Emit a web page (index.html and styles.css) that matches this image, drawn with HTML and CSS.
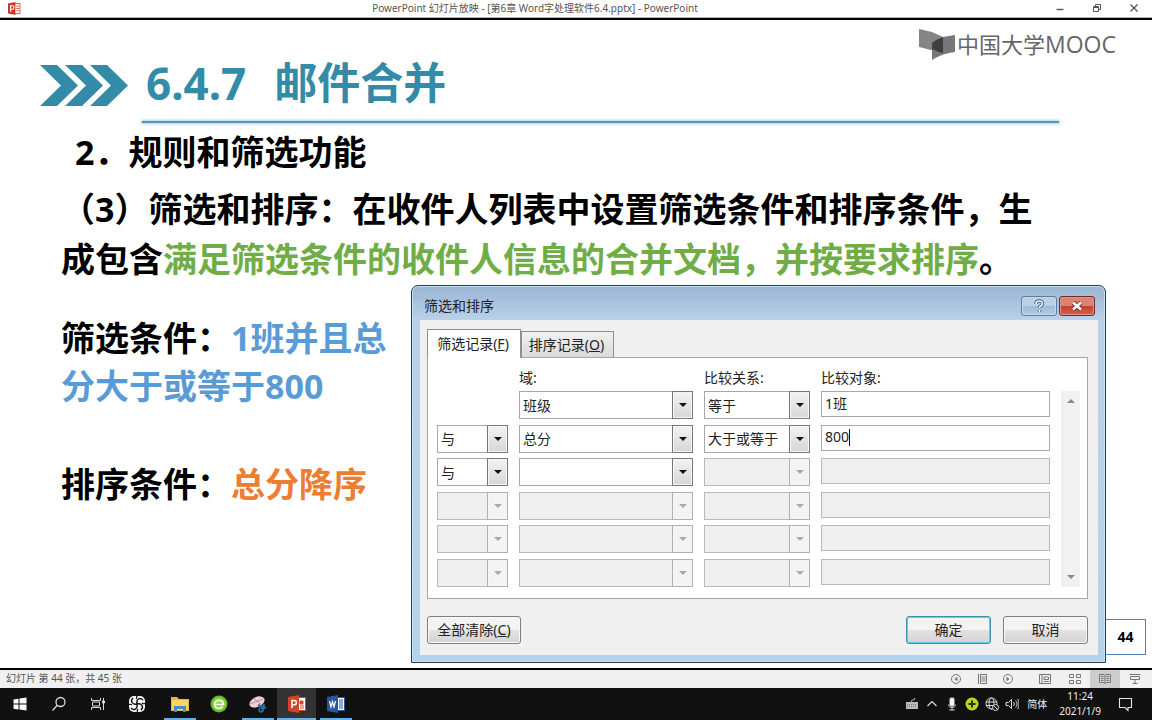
FILE: index.html
```html
<!DOCTYPE html>
<html lang="zh-CN">
<head>
<meta charset="utf-8">
<meta name="viewport" content="width=device-width, initial-scale=1">
<title>PowerPoint 幻灯片放映</title>
<link rel="stylesheet" href="styles.css">
</head>
<body>
<header class="titlebar">
  <svg class="app-icon" viewBox="0 0 14 14" aria-hidden="true"><path d="M7 1.500h6v11H7z" fill="#fff" stroke="#d8503c"/><path d="M9 4.500h3M9 7h3M9 9.500h3" stroke="#d8503c"/><path d="M0 1.500 8 0v14l-8-1.500z" fill="#c63a2b"/><path d="M2.800 10.500V4h1.800a1.800 1.800 0 0 1 0 3.800H2.800" fill="none" stroke="#fff" stroke-width="1.200"/></svg>
  <div class="window-title">PowerPoint 幻灯片放映 - [第6章 Word字处理软件6.4.pptx] - PowerPoint</div>
  <div class="window-buttons">
    <button aria-label="最小化"><svg viewBox="0 0 10 10"><path d="M1.500 6.500h7" stroke-width="1.400"/></svg></button>
    <button aria-label="还原"><svg viewBox="0 0 10 10"><path d="M1.500 3.500h5v5h-5zM3.500 3.500v-2h5v5h-2M1.500 4.500h5"/></svg></button>
    <button aria-label="关闭"><svg viewBox="0 0 10 10"><path d="M1.500 1.500l7 7M8.500 1.500l-7 7" stroke-width="1.300"/></svg></button>
  </div>
</header>

<main class="slide">
  <div class="slide-head">
    <svg class="chevrons" viewBox="0 0 88 41" aria-hidden="true"><path d="M0 0h17l21 20.500L17 41H0l21-20.500z"/><path d="M25 0h17l21 20.500L42 41H25l21-20.500z"/><path d="M50 0h17l21 20.500L67 41H50l21-20.500z"/></svg>
    <h1 class="slide-title"><span class="number">6.4.7</span><span>邮件合并</span></h1>
    <div class="logo">
      <svg class="logo-mark" viewBox="0 0 36 31" aria-hidden="true"><path d="M0 0l13 3 11 5v16L0 18z" fill="#858585"/><path d="M13 14q5-4 11-6l12-2v17q-12 1-23 8z" fill="#777"/><path d="M13 14q5-4 11-6v16q-5-1-11-4z" fill="#3f3f3f"/></svg>
      <span class="logo-text"><span class="logo-zh">中国大学</span>MOOC</span>
    </div>
  </div>
  <div class="rule"></div>
  <h2 class="subtitle">2．规则和筛选功能</h2>
  <p class="lead">（3）筛选和排序：在收件人列表中设置筛选条件和排序条件，生<br>成包含<span class="green">满足筛选条件的收件人信息的合并文档，并按要求排序</span>。</p>

  <div class="slide-body">
    <div class="notes">
      <p>筛选条件：<span class="blue">1班并且总<br>分大于或等于800</span></p>
      <p>排序条件：<span class="orange">总分降序</span></p>
    </div>

    <section class="dialog" aria-label="筛选和排序">
      <div class="dialog-title">
        <span>筛选和排序</span>
        <div class="dialog-controls">
          <button class="help" aria-label="帮助"><svg viewBox="0 0 14 14"><path d="M4 5c0-4 6.500-4 6.500-.5C10.500 7 7.500 6.500 7.500 9M7.500 11v2" stroke="#46617e" stroke-width="3.400"/><path d="M4 5c0-4 6.500-4 6.500-.5C10.500 7 7.500 6.500 7.500 9M7.500 11v2" stroke="#eef5fb" stroke-width="1.600"/></svg></button>
          <button class="close" aria-label="关闭"><svg viewBox="0 0 14 14"><path d="M3 3.500l8 7M11 3.500l-8 7" stroke="#75352f" stroke-width="4.400"/><path d="M3 3.500l8 7M11 3.500l-8 7" stroke="#fff" stroke-width="2.600"/></svg></button>
        </div>
      </div>
      <form class="client">
        <div class="tabs" role="tablist">
          <button type="button" class="tab active" role="tab" aria-selected="true">筛选记录(<u>F</u>)</button>
          <button type="button" class="tab" role="tab" aria-selected="false">排序记录(<u>O</u>)</button>
        </div>
        <div class="panel">
          <div class="filters heads"><span></span><span>域:</span><span>比较关系:</span><span>比较对象:</span></div>
          <div class="table-area">
            <div class="filters rows">
              <span></span>
              <span class="combo"><select aria-label="域 1"><option>班级</option></select></span>
              <span class="combo"><select aria-label="比较关系 1"><option>等于</option></select></span>
              <input aria-label="比较对象 1" value="1班">

              <span class="combo"><select aria-label="逻辑 2"><option>与</option></select></span>
              <span class="combo"><select aria-label="域 2"><option>总分</option></select></span>
              <span class="combo"><select aria-label="比较关系 2"><option>大于或等于</option></select></span>
              <span class="field"><input aria-label="比较对象 2" value="800"><i class="caret"></i></span>

              <span class="combo"><select aria-label="逻辑 3"><option>与</option></select></span>
              <span class="combo"><select aria-label="域 3"><option></option></select></span>
              <span class="combo off"><select aria-label="比较关系 3" disabled></select></span>
              <input aria-label="比较对象 3" disabled>

              <span class="combo off"><select aria-label="逻辑 4" disabled></select></span>
              <span class="combo off"><select aria-label="域 4" disabled></select></span>
              <span class="combo off"><select aria-label="比较关系 4" disabled></select></span>
              <input aria-label="比较对象 4" disabled>

              <span class="combo off"><select aria-label="逻辑 5" disabled></select></span>
              <span class="combo off"><select aria-label="域 5" disabled></select></span>
              <span class="combo off"><select aria-label="比较关系 5" disabled></select></span>
              <input aria-label="比较对象 5" disabled>

              <span class="combo off"><select aria-label="逻辑 6" disabled></select></span>
              <span class="combo off"><select aria-label="域 6" disabled></select></span>
              <span class="combo off"><select aria-label="比较关系 6" disabled></select></span>
              <input aria-label="比较对象 6" disabled>
            </div>
            <div class="scroll">
              <svg viewBox="0 0 8 4"><path d="M0 4l4-4 4 4z"/></svg>
              <svg viewBox="0 0 8 4"><path d="M0 0h8L4 4z"/></svg>
            </div>
          </div>
        </div>
        <div class="actions">
          <button type="button" class="btn clear">全部清除(<u>C</u>)</button>
          <button type="button" class="btn ok">确定</button>
          <button type="button" class="btn">取消</button>
        </div>
      </form>
    </section>

    <div class="page-no">44</div>
  </div>
</main>

<div class="statusbar">
  <span>幻灯片 第 44 张，共 45 张</span>
  <div class="views">
    <button aria-label="上一张"><svg viewBox="0 0 12 12"><circle cx="6" cy="6" r="4.500"/><path d="M7.500 3.800v4.400L4.300 6z" fill="#777" stroke="none"/></svg></button>
    <button aria-label="菜单"><svg viewBox="0 0 12 12"><path d="M2.500 1v10M4.500 1.500h6v9h-6zM5.500 4h4M5.500 6h4M5.500 8h4"/></svg></button>
    <button aria-label="下一张"><svg viewBox="0 0 12 12"><circle cx="6" cy="6" r="4.500"/><path d="M4.500 3.800v4.400L7.700 6z" fill="#777" stroke="none"/></svg></button>
    <button class="wide first" aria-label="普通视图"><svg viewBox="0 0 12 12"><path d="M.5 1.500h11v9H.5zM3 1.500v9M5 4h4.500v2.500H5zM5 8.500h5"/></svg></button>
    <button class="wide" aria-label="幻灯片浏览"><svg viewBox="0 0 12 12"><path d="M.5 1.500h4v3h-4zM7.500 1.500h4v3h-4zM.5 7.500h4v3h-4zM7.500 7.500h4v3h-4z"/></svg></button>
    <button class="wide current" aria-label="阅读视图"><svg viewBox="0 0 12 12"><path d="M.5 1.500H5l1 1 1-1h4.500v8H7l-1 1-1-1H.5zM6 2.500v8M2 3.500h2.500M2 5.500h2.500M2 7.500h2.500M7.500 3.500H10M7.500 5.500H10M7.500 7.500H10"/></svg></button>
    <button class="wide" aria-label="幻灯片放映"><svg viewBox="0 0 12 12"><path d="M.5 1.500h11M1.500 3.500h9v3h-9zM6 6.500v4M3.500 10.500h5"/></svg></button>
  </div>
</div>

<footer class="taskbar">
  <nav class="apps">
    <button aria-label="开始"><svg viewBox="0 0 18 18" fill="#fff"><path d="M2.500 4.500l5-.8V8.500h-5zM8.500 3.500l7-1v6h-7zM2.500 9.500h5v5l-5-.8zM8.500 9.500h7v6l-7-1z"/></svg></button>
    <button aria-label="搜索"><svg viewBox="0 0 18 18" fill="none" stroke="#ddd" stroke-width="1.300"><circle cx="10.500" cy="7" r="4.500"/><path d="M7.300 10.300L2.500 15.500"/></svg></button>
    <button aria-label="任务视图"><svg viewBox="0 0 18 18" fill="none" stroke="#ddd"><path d="M2.500 3v2.500h9V3M2.500 15v-2.500h9V15M3.500 7h7v4h-7zM14.500 3v12"/><path d="M13.500 6h2v2h-2z" fill="#ddd"/></svg></button>
    <button aria-label="应用"><svg viewBox="0 0 18 18"><rect x="1" y="1" width="16" height="16" rx="5" fill="#f5f5f5"/><path d="M9 9C4 10 2 6 5 3M9 9C8 4 12 2 15 5M9 9c5-1 7 3 4 6M9 9c1 5-3 7-6 4" fill="none" stroke="#111" stroke-width="1.400"/><path d="M8 0c1 1 1 3 0 4M18 8c-1 1-3 1-4 0M10 18c-1-1-1-3 0-4M0 10c1-1 3-1 4 0" fill="none" stroke="#111" stroke-width="1.200"/></svg></button>
    <button class="running explorer" aria-label="文件资源管理器"><svg viewBox="0 0 18 18"><path d="M0 2h6l2 2h10v12H0z" fill="#e9b63c"/><path d="M1 5h16v10H1z" fill="#fbd465"/><path d="M3 17v-6h12v6h-3v-3H6v3z" fill="#438ecb"/></svg></button>
    <button aria-label="浏览器"><svg viewBox="0 0 18 18"><circle cx="9" cy="9" r="8.500" fill="#68b52a"/><circle cx="9" cy="9" r="6.500" fill="#8ed455"/><path d="M4.500 9.500h9c-.4-5.500-8.600-5.500-9 0 .5 4.500 6 5 8 2" fill="none" stroke="#f6ffe9" stroke-width="1.600"/></svg></button>
    <button class="running" aria-label="截图工具"><svg viewBox="0 0 18 18"><ellipse cx="8" cy="7" rx="8" ry="5" transform="rotate(-25 8 7)" fill="#e9d1d6"/><path d="M1 9l13-5M4 3l8 6" stroke="#c38d9a"/><path d="M9 10l8 3M13 17l2-8" stroke="#2671a4" stroke-width="2"/><circle cx="12" cy="15" r="2" fill="none" stroke="#2671a4" stroke-width="1.500"/></svg></button>
    <button class="running active" aria-label="PowerPoint"><svg viewBox="0 0 18 18"><path d="M9 2.500h8.500v13H9z" fill="#fff" stroke="#d04427"/><path d="M12 6h3v3h-3zM12 11h4M12 13h4" fill="#d04427" stroke="#d04427"/><path d="M0 2l11-2v18L0 16z" fill="#d04427"/><path d="M4 13V5.500h2.200a2 2 0 0 1 0 4.300H4" fill="none" stroke="#fff" stroke-width="1.500"/></svg></button>
    <button class="running" aria-label="Word"><svg viewBox="0 0 18 18"><path d="M9 2.500h8.500v13H9z" fill="#fff" stroke="#2b579a"/><path d="M12 5h4M12 7h4M12 9h4M12 11h4M12 13h4" stroke="#2b579a"/><path d="M0 2l11-2v18L0 16z" fill="#2b579a"/><path d="M2.500 6l1.500 6 1.500-5.500L7 12l1.500-6" fill="none" stroke="#fff" stroke-width="1.200"/></svg></button>
  </nav>
  <div class="tray">
    <svg viewBox="0 0 14 14" fill="#bbb"><path d="M1 5h12v7H1z"/><path d="M6 5c0-3 4-1 4-4" fill="none" stroke="#bbb"/><path d="M2 7.500h10M2 9.500h10" stroke="#777" stroke-dasharray="1 1"/></svg>
    <svg viewBox="0 0 14 14" fill="none" stroke="#ddd" stroke-width="1.200"><path d="M2.500 9L7 4.500 11.500 9"/></svg>
    <svg viewBox="0 0 14 14" fill="none" stroke="#ddd"><rect x="5" y="1" width="4" height="8" rx="1" fill="#fff"/><path d="M3.500 7.500c0 4 7 4 7 0M7 11v2M4.500 13h5"/></svg>
    <svg viewBox="0 0 14 14"><circle cx="7" cy="7" r="6.500" fill="#b9d526"/><path d="M7 3.500v7M3.500 7h7" stroke="#26350a" stroke-width="2"/></svg>
    <svg viewBox="0 0 14 14" fill="none" stroke="#ddd"><circle cx="6.500" cy="6.500" r="5.500"/><ellipse cx="6.500" cy="6.500" rx="2.500" ry="5.500"/><path d="M1 5h11M1 8.500h11"/><circle cx="10.500" cy="10.500" r="3" fill="#111"/><path d="M8.500 8.500l4 4"/></svg>
    <svg viewBox="0 0 14 14" fill="none" stroke="#ddd"><path d="M1 5.500h2.500l3-3v9l-3-3H1zM8.500 5c1 1 1 3 0 4M10.500 3.500c2 2 2 5 0 7M12.500 2c2 3 2 7 0 10"/></svg>
    <span class="ime">简体</span>
    <time class="clock"><span>11:24</span><span>2021/1/9</span></time>
    <button class="notice" aria-label="通知"><svg viewBox="0 0 16 16" fill="none" stroke="#e5e5e5" stroke-width="1.100"><path d="M1.500 2.500h12v9H10v3l-3-3H1.500z"/></svg></button>
  </div>
</footer>
</body>
</html>
```
FILE: styles.css
```css
*, *::before, *::after { box-sizing: border-box; }
body {
  margin: 0;
  min-height: 100vh;
  display: flex;
  flex-direction: column;
  background: #fff;
  color: #000;
  font-family: "Noto Sans", "Noto Sans CJK SC", sans-serif;
}
button { font: inherit; color: inherit; padding: 0; border: 0; background: none; }
svg { display: block; flex: none; }
h1, h2, p { margin: 0; }

.titlebar {
  display: grid;
  grid-template-columns: 1fr auto 1fr;
  align-items: center;
  height: 20px;
  padding: 0 8px 3px;
  border-bottom: 2px solid #000;
  box-shadow: inset 0 -1px #b5b5b5;
  font-size: 10px;
  line-height: 16px;
  color: #555;
}
.app-icon { width: 13px; height: 13px; }
.window-title { padding-right: 82px; }
.window-buttons { display: flex; justify-content: flex-end; gap: 27px; padding-right: 5px; }
.window-buttons svg { width: 10px; height: 10px; fill: none; stroke: #555; }

.slide { flex: 1; display: flex; flex-direction: column; font-weight: 700; }
.slide-head { display: flex; align-items: center; height: 101px; padding: 0 36px 0 40px; }
.chevrons { width: 88px; height: 41px; margin-top: 30px; fill: #338ba8; }
.slide-title {
  display: flex;
  gap: 28px;
  margin: 24px 0 0 18px;
  color: #338ba8;
  font-size: 43px;
  line-height: 60px;
}
.number { font-size: 44px; }
.logo { display: flex; align-items: center; gap: 2px; align-self: flex-start; margin: 8px 0 0 auto; color: #666; }
.logo-mark { width: 36px; height: 31px; }
.logo-text { font: 400 23px/32px "Open Sans", "Noto Sans CJK SC", sans-serif; }
.logo-zh { font-size: 22px; }
.rule {
  height: 2px;
  margin: 0 93px 0 142px;
  background: #6197ae;
  box-shadow: 0 0 3px 1px #a9d3e4;
}
.subtitle { margin: 5px 0 0 75px; font-size: 34px; line-height: 48px; }
.lead { margin: 8px 0 1px 61px; font-size: 34px; line-height: 50px; white-space: nowrap; }
.green { color: #70ad47; }
.blue { color: #5b9bd5; }
.orange { color: #ed7d31; }

.slide-body {
  flex: 1;
  display: grid;
  grid-template-columns: 411px 1fr 46px;
  padding-bottom: 5px;
  border-bottom: 2px solid #000;
}
.notes { padding: 29px 0 0 61px; font-size: 34px; line-height: 48px; white-space: nowrap; }
.notes p + p { margin-top: 50px; }
.page-no {
  align-self: end;
  width: 40px;
  margin-bottom: 8px;
  border: 1px solid #4f83b5;
  border-left: 0;
  font-size: 14px;
  line-height: 34px;
  text-align: center;
}

.dialog {
  display: flex;
  flex-direction: column;
  padding: 0 7px 7px 8px;
  border: 1px solid #24414d;
  border-radius: 7px 7px 0 0;
  background: linear-gradient(#9ab5d3, #b9d1ea 34px, #b9d1ea 130px, #b4d3e9);
  box-shadow: inset 0 0 0 1px #c7e2f2;
  font-size: 14px;
  font-weight: 400;
  color: #222;
}
.dialog-title { display: flex; justify-content: space-between; height: 34px; padding: 10px 3px 0 4px; line-height: 20px; }
.dialog-controls { display: flex; gap: 2px; }
.dialog-controls button {
  display: flex;
  align-items: center;
  justify-content: center;
  width: 36px;
  height: 20px;
  border: 1px solid #5d7d9d;
  border-radius: 3px;
  box-shadow: inset 0 0 0 1px #c3d8ec;
  background: linear-gradient(#b9d0e7 50%, #9dbbd8 50%, #b0cce5);
}
.dialog-controls .close {
  border-color: #6e2c28;
  box-shadow: inset 0 0 0 1px #e09488;
  background: linear-gradient(#de8272 50%, #c4402c 50%, #d1614c);
}
.dialog-controls svg { width: 14px; height: 14px; fill: none; }
.client { flex: 1; display: flex; flex-direction: column; padding: 9px 10px 11px 7px; background: #f0f0f0; }
.tabs { display: flex; align-items: flex-end; }
.tab {
  width: 93px;
  height: 26px;
  padding: 0 2px 2px 0;
  border: 1px solid #8f8f8f;
  border-bottom: 0;
  background: linear-gradient(#f1f1f1, #dadada);
}
.tab.active { z-index: 1; width: 94px; height: 29px; margin-bottom: -1px; background: #fff; }
.panel { flex: 1; padding: 10px 7px 11px 9px; border: 1px solid #a5a5a5; background: #fff; }
.filters { display: grid; grid-template-columns: 71fr 174fr 106fr 229fr; column-gap: 11px; }
.heads { height: 23px; margin-right: 30px; line-height: 20px; }
.table-area { display: flex; gap: 11px; height: 196px; }
.rows { flex: 1; grid-template-rows: repeat(6, 28px); align-content: space-between; }
.combo, .field { position: relative; display: block; min-width: 0; }
select, input {
  display: block;
  width: 100%;
  min-width: 0;
  height: 28px;
  margin: 0;
  padding: 0 3px;
  border: 1px solid #a8a8a8;
  border-radius: 0;
  outline: 0;
  appearance: none;
  background: #fff;
  color: #222;
  font: inherit;
  opacity: 1;
}
input { height: 26px; padding: 0 3px 2px; }
select:disabled, input:disabled { border-color: #b8b8b8; background: #efefef; }
.combo::before {
  content: "";
  position: absolute;
  inset: 0 0 0 auto;
  width: 21px;
  border: 1px solid #777;
  background: linear-gradient(#f3f3f3, #d6d6d6);
  box-shadow: inset 0 0 0 1px #f6f6f6;
  pointer-events: none;
}
.combo::after {
  content: "";
  position: absolute;
  top: 12px;
  right: 6px;
  border: 4px solid transparent;
  border-top-color: #111;
  border-bottom: 0;
  pointer-events: none;
}
.combo.off::before { border-color: #b0b0b0; background: #f3f3f3; }
.combo.off::after { border-top-color: #a9a9a9; }
.caret { position: absolute; left: 28px; top: 4px; width: 1px; height: 17px; background: #111; }
.scroll {
  display: flex;
  flex-direction: column;
  justify-content: space-between;
  align-items: center;
  width: 19px;
  padding: 8px 0;
  background: #f1f1f1;
}
.scroll svg { width: 8px; height: 4px; fill: #888; }
.actions { display: flex; gap: 12px; padding-top: 17px; }
.btn {
  width: 85px;
  height: 28px;
  padding-bottom: 2px;
  border: 1px solid #7f7f7f;
  border-radius: 3px;
  background: linear-gradient(#f3f3f3 50%, #e3e3e3 50%, #d3d3d3);
  box-shadow: inset 0 0 0 1px #f8f8f8;
}
.clear { width: 94px; margin-right: auto; }
.ok { border-color: #3c91ad; box-shadow: inset 0 0 0 1px #62cdeb; }

.statusbar {
  display: flex;
  justify-content: space-between;
  height: 18px;
  padding-left: 6px;
  background: #f0f0f0;
  color: #555;
  font-size: 10px;
  line-height: 16px;
}
.views { display: flex; padding-right: 2px; }
.views button { display: flex; align-items: center; justify-content: center; width: 26px; }
.views .wide { width: 30px; }
.views .first { margin-left: 9px; }
.views .current { background: #cdcdcd; }
.views svg { width: 12px; height: 12px; fill: none; stroke: #777; }

.taskbar { display: flex; justify-content: space-between; height: 32px; background: #111; color: #eee; }
.apps { display: flex; }
.apps button { display: flex; align-items: center; justify-content: center; width: 39px; }
.apps .explorer { margin-left: 4px; }
.apps .running { background: linear-gradient(#6aaee4, #6aaee4) bottom / 32px 2px no-repeat; }
.apps .active { background-color: #333; background-size: 100% 2px; }
.apps svg { width: 18px; height: 18px; }
.tray { display: flex; align-items: center; gap: 6px; padding-right: 9px; font-size: 10px; line-height: 15px; }
.tray svg { width: 14px; height: 14px; }
.ime { margin-left: 2px; }
.clock { display: flex; flex-direction: column; align-items: center; margin-left: 6px; }
.notice { padding: 0 9px 0 11px; }
.tray .notice svg { width: 16px; height: 16px; }
```
